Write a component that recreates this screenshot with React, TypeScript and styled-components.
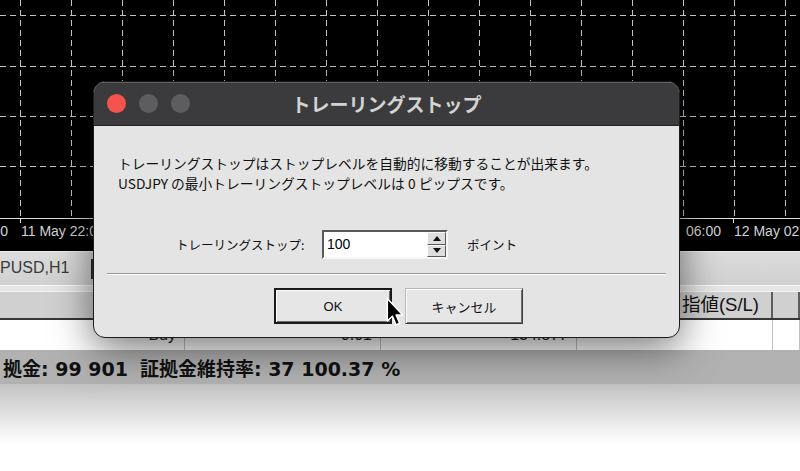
import React from 'react';
import styled, { createGlobalStyle } from 'styled-components';

const GlobalStyle = createGlobalStyle`
  html, body {
    margin: 0;
    padding: 0;
    background: #fff;
    overflow: hidden;
  }
  body {
    font-family: "Noto Sans CJK JP", "Noto Sans", sans-serif;
  }
`;

const Screen = styled.div`
  position: relative;
  width: 800px;
  height: 471px;
  overflow: hidden;
  background: #fff;
`;

const Terminal = styled.div`
  display: flex;
  flex-direction: column;
`;

const ChartSvg = styled.svg`
  display: block;
  width: 800px;
  height: 251px;
  background: #000;
`;

const AxisLabel = styled.text`
  font-family: "Liberation Sans", sans-serif;
  font-size: 14px;
  fill: #d2d2d2;
`;

const TabBar = styled.div`
  display: flex;
  align-items: center;
  height: 33px;
  border-top: 1px solid #efefef;
  background: linear-gradient(#dcdcdc, #d0d0d0);
`;

const Tab = styled.div`
  width: 91px;
  height: 20px;
  line-height: 20px;
  border-right: 2px solid #2e2e2e;
  font: 16px "Liberation Sans", sans-serif;
  color: #3a3a3a;
  white-space: nowrap;
  overflow: hidden;
`;

const Divider = styled.div`
  height: 5px;
  border-top: 1px solid #fafafa;
  background: #e6e6e6;
`;

const HeaderRow = styled.div`
  display: flex;
  height: 26px;
  border-top: 1px solid #f4f4f4;
  border-bottom: 2px solid #363636;
  background: #d0d0d0;
`;

const HeaderCell = styled.div<{ $w: number }>`
  flex: none;
  width: ${({ $w }) => $w}px;
  box-sizing: border-box;
  padding-right: 12px;
  border-right: 2px solid #5e5e5e;
  text-align: right;
  font: 18.5px "Liberation Sans", "Noto Sans CJK JP", sans-serif;
  line-height: 26px;
  color: #111;
  white-space: nowrap;
  overflow: hidden;
`;

const DataRow = styled.div`
  display: flex;
  height: 30px;
  background: #fff;
`;

const DataCell = styled.div<{ $w: number }>`
  flex: none;
  width: ${({ $w }) => $w}px;
  box-sizing: border-box;
  padding-right: 8px;
  border-right: 1px solid #c2c2c2;
  text-align: right;
  font: 16px "Liberation Sans", sans-serif;
  line-height: 30px;
  color: #222;
`;

const StatusBar = styled.div`
  display: flex;
  align-items: center;
  gap: 12px;
  height: 34px;
  padding-left: 3px;
  background: #b1b1b1;
  font: bold 19px "DejaVu Sans", "Noto Sans CJK JP", sans-serif;
  color: #111;
  white-space: nowrap;
`;

const BottomShadow = styled.div`
  height: 60px;
  background: linear-gradient(rgba(0, 0, 0, 0.24), rgba(0, 0, 0, 0));
`;

const Dialog = styled.div`
  position: absolute;
  left: 93px;
  top: 81px;
  width: 587px;
  height: 257px;
  box-sizing: border-box;
  display: flex;
  flex-direction: column;
  border: 1px solid #1c1c1c;
  border-radius: 12px;
  overflow: hidden;
  background: #e4e4e4;
  box-shadow: 0 10px 40px rgba(0, 0, 0, 0.55);
`;

const TitleBar = styled.div`
  display: grid;
  grid-template-columns: 1fr auto 1fr;
  align-items: center;
  height: 43px;
  border-bottom: 1px solid #222;
  background: #3b3b3d;
  box-shadow: inset 0 1px 0 rgba(255, 255, 255, 0.18);
`;

const Lights = styled.div`
  display: flex;
  gap: 13px;
  padding-left: 13px;
`;

const Light = styled.span<{ $color: string }>`
  width: 19px;
  height: 19px;
  border-radius: 50%;
  background: ${({ $color }) => $color};
`;

const Title = styled.div`
  font: bold 19px "Noto Sans CJK JP", sans-serif;
  color: #d3d3d3;
  white-space: nowrap;
`;

const Body = styled.div`
  display: flex;
  flex-direction: column;
  padding: 27px 0 13px;
`;

const Message = styled.p`
  margin: 0 0 0 24px;
  font: 13.75px "Noto Sans CJK JP", sans-serif;
  line-height: 20px;
  color: #111;
  white-space: nowrap;
`;

const InputRow = styled.div`
  display: flex;
  align-items: center;
  height: 29px;
  margin-top: 37px;
  padding-left: 82px;
`;

const Label = styled.span`
  width: 146px;
  font: 12.5px "Noto Sans CJK JP", sans-serif;
  color: #111;
  white-space: nowrap;
`;

const InputBox = styled.div`
  display: flex;
  width: 126px;
  height: 29px;
  box-sizing: border-box;
  border: 2px solid;
  border-color: #5a5a5a #f6f6f6 #f6f6f6 #5a5a5a;
  background: #fff;
`;

const TextField = styled.div`
  flex: 1;
  padding-left: 3px;
  font: 14px "Liberation Sans", sans-serif;
  line-height: 25px;
  color: #000;
`;

const Spinner = styled.div`
  display: flex;
  flex-direction: column;
  width: 19px;
`;

const SpinButton = styled.div`
  flex: 1;
  display: flex;
  align-items: center;
  justify-content: center;
  box-sizing: border-box;
  border: 1px solid;
  border-color: #fafafa #5a5a5a #5a5a5a #fafafa;
  background: #dedede;
`;

const Arrow = styled.span<{ $up?: boolean }>`
  width: 0;
  height: 0;
  border-left: 4px solid transparent;
  border-right: 4px solid transparent;
  ${({ $up }) => ($up ? 'border-bottom: 5px solid #111;' : 'border-top: 5px solid #111;')}
`;

const Unit = styled.span`
  margin-left: 19px;
  font: 12.5px "Noto Sans CJK JP", sans-serif;
  color: #111;
`;

const Separator = styled.div`
  height: 1px;
  margin: 14px 13px 0;
  background: #9a9a9a;
  border-bottom: 1px solid #fbfbfb;
`;

const ButtonRow = styled.div`
  display: flex;
  gap: 13px;
  margin-top: 13px;
  padding-left: 180px;
`;

const Button = styled.div<{ $default?: boolean }>`
  display: flex;
  align-items: center;
  justify-content: center;
  width: 118px;
  height: 36px;
  box-sizing: border-box;
  background: #e6e6e6;
  color: #111;
  font: 13px "Liberation Sans", "Noto Sans CJK JP", sans-serif;
  ${({ $default }) =>
    $default
      ? `border: 2px solid #1a1a1a;
         box-shadow: inset 1px 1px 0 #fdfdfd, inset -1px -1px 0 #6a6a6a;`
      : `border: 1px solid;
         border-color: #b8b8b8 #3c3c3c #3c3c3c #b8b8b8;
         box-shadow: inset 1px 1px 0 #fdfdfd, inset -1px -1px 0 #707070;`}
`;

const Cursor = styled.svg`
  position: absolute;
  left: 386px;
  top: 297px;
  width: 18px;
  height: 30px;
`;

const vLines = Array.from({ length: 16 }, (_, i) => 20 + i * 51);
const hLines = [15, 66, 116, 166];

function Chart() {
  return (
    <ChartSvg viewBox="0 0 800 251">
      <g stroke="#c4c4c4" strokeWidth={1} strokeDasharray="6 4" shapeRendering="crispEdges">
        {vLines.map((x) => (
          <line key={`v${x}`} x1={x + 0.5} y1={0} x2={x + 0.5} y2={218} />
        ))}
        {hLines.map((y) => (
          <line key={`h${y}`} x1={0} y1={y + 0.5} x2={800} y2={y + 0.5} />
        ))}
      </g>
      <g stroke="#dedede" strokeWidth={1} shapeRendering="crispEdges">
        <line x1={0} y1={218.5} x2={800} y2={218.5} />
        <line x1={20.5} y1={218} x2={20.5} y2={223} />
        <line x1={733.5} y1={218} x2={733.5} y2={223} />
      </g>
      <AxisLabel x={8} y={236} textAnchor="end">11 May 18:00</AxisLabel>
      <AxisLabel x={21} y={236}>11 May 22:00</AxisLabel>
      <AxisLabel x={686} y={236}>06:00</AxisLabel>
      <AxisLabel x={734} y={236}>12 May 02:00</AxisLabel>
    </ChartSvg>
  );
}

const columns = [185, 196, 196, 196, 27];

export default function App() {
  return (
    <Screen>
      <GlobalStyle />
      <Terminal>
        <Chart />
        <TabBar>
          <Tab>PUSD,H1</Tab>
        </TabBar>
        <Divider />
        <HeaderRow>
          <HeaderCell $w={columns[0]} />
          <HeaderCell $w={columns[1]} />
          <HeaderCell $w={columns[2]} />
          <HeaderCell $w={columns[3]}>指値(S/L)</HeaderCell>
          <HeaderCell $w={columns[4]} />
        </HeaderRow>
        <DataRow>
          <DataCell $w={columns[0]}>Buy</DataCell>
          <DataCell $w={columns[1]}>0.01</DataCell>
          <DataCell $w={columns[2]}>134.877</DataCell>
          <DataCell $w={columns[3]} />
          <DataCell $w={columns[4]} />
        </DataRow>
        <StatusBar>
          <span>拠金: 99 901</span>
          <span>証拠金維持率: 37 100.37 %</span>
        </StatusBar>
        <BottomShadow />
      </Terminal>

      <Dialog>
        <TitleBar>
          <Lights>
            <Light $color="#f5534e" />
            <Light $color="#5d5d5f" />
            <Light $color="#5d5d5f" />
          </Lights>
          <Title>トレーリングストップ</Title>
          <span />
        </TitleBar>
        <Body>
          <Message>
            トレーリングストップはストップレベルを自動的に移動することが出来ます。
            <br />
            USDJPY の最小トレーリングストップレベルは 0 ピップスです。
          </Message>
          <InputRow>
            <Label>トレーリングストップ:</Label>
            <InputBox>
              <TextField>100</TextField>
              <Spinner>
                <SpinButton>
                  <Arrow $up />
                </SpinButton>
                <SpinButton>
                  <Arrow />
                </SpinButton>
              </Spinner>
            </InputBox>
            <Unit>ポイント</Unit>
          </InputRow>
          <Separator />
          <ButtonRow>
            <Button $default>OK</Button>
            <Button>キャンセル</Button>
          </ButtonRow>
        </Body>
      </Dialog>

      <Cursor viewBox="0 0 14 23">
        <path
          d="M1 1 L1 18.5 L5 14.8 L7.8 21.5 L10.6 20.3 L7.9 13.8 L13 13.8 Z"
          fill="#000"
          stroke="#fff"
          strokeWidth={1.2}
          strokeLinejoin="round"
        />
      </Cursor>
    </Screen>
  );
}
